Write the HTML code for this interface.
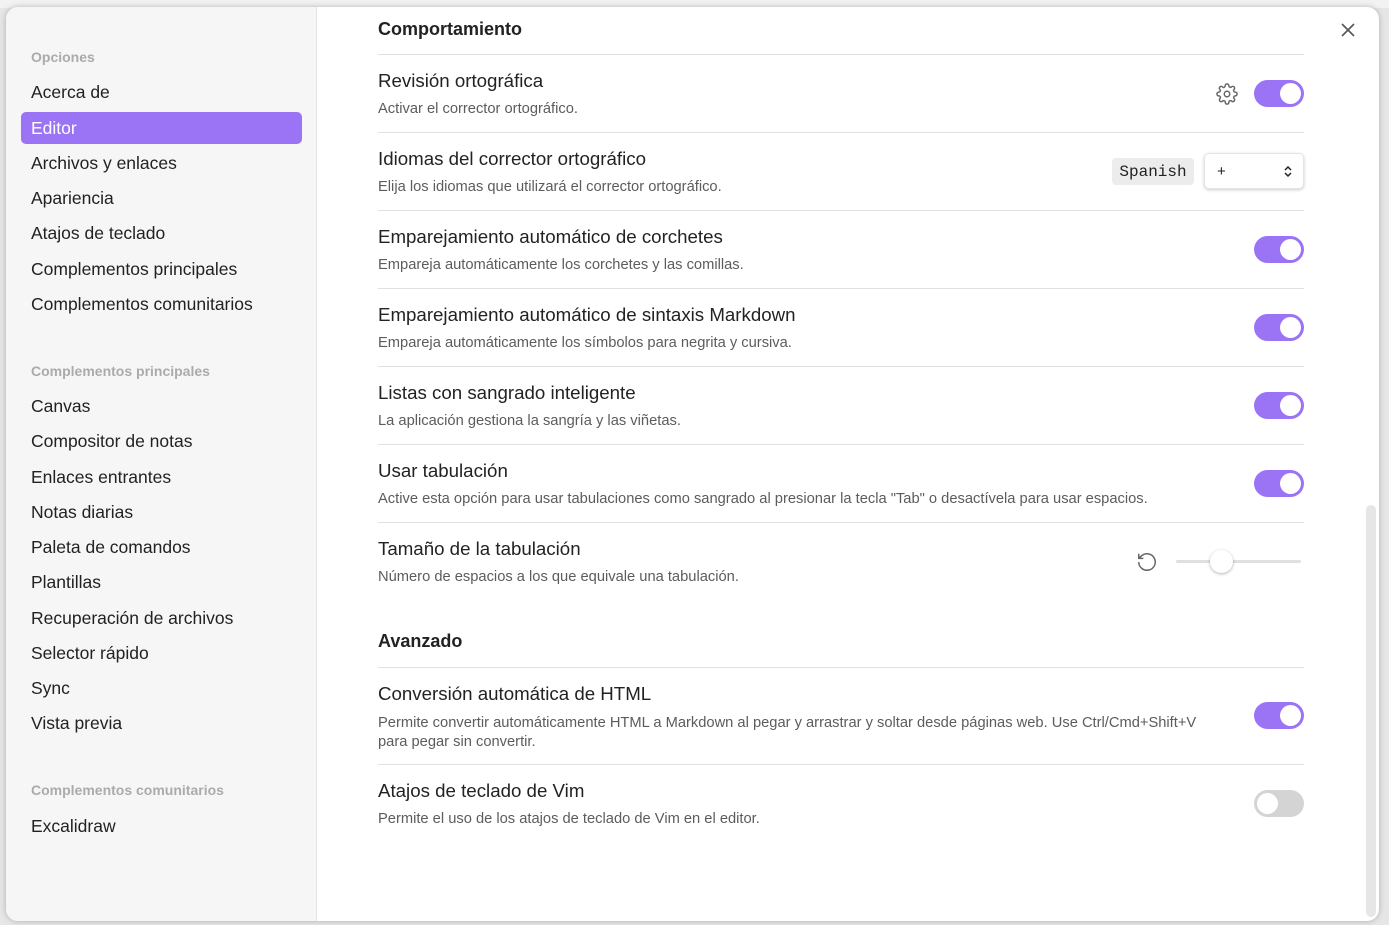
<!DOCTYPE html>
<html><head><meta charset="utf-8"><style>
*{margin:0;padding:0;box-sizing:border-box}
body{width:1389px;height:925px;background:#e6e6e6;font-family:"Liberation Sans",sans-serif;position:relative;overflow:hidden}
.top{position:absolute;left:0;top:0;width:1389px;height:8px;background:#f2f2f2}
.modal{position:absolute;left:6px;top:7px;width:1373px;height:914px;background:#fff;border-radius:12px;overflow:hidden;box-shadow:0 0 6px rgba(0,0,0,.25)}
.side{position:absolute;left:0;top:0;width:311px;height:100%;background:#f6f6f6;border-right:1px solid #e3e3e3}
.t{position:absolute;white-space:nowrap}
.hd{color:#ababab;font-size:14px;font-weight:bold;left:25px}
.it{color:#222;font-size:17.5px;left:25px}
.sel{position:absolute;left:15px;top:105px;width:281px;height:32px;background:#9a74f4;border-radius:5px}
.ti{font-size:18.7px;color:#222;left:372px}
.de{font-size:14.7px;color:#5c5c5c;left:372px;margin-top:2px}
.sh{font-size:18px;font-weight:bold;color:#222;left:372px}
.hr{position:absolute;left:372px;width:926px;height:1px;background:#e0e0e0}
.tg{position:absolute;left:1248px;width:50px;height:27px;border-radius:14px;background:#9a74f4}
.tg::after{content:"";position:absolute;right:3px;top:3px;width:21px;height:21px;border-radius:50%;background:#fff}
.off{background:#d4d4d4}
.off::after{left:3px;right:auto}
.sb{position:absolute;left:1360px;top:498px;width:10px;height:412px;background:#e6e6e6;border-radius:5px}
</style></head><body>
<div class="top"></div>
<div class="modal">
<div class="side">
<div class="t hd" style="top:42px">Opciones</div>
<div class="t it" style="top:75px">Acerca de</div>
<div class="sel"></div>
<div class="t it" style="top:111px;color:#fff">Editor</div>
<div class="t it" style="top:146px">Archivos y enlaces</div>
<div class="t it" style="top:181px">Apariencia</div>
<div class="t it" style="top:216px">Atajos de teclado</div>
<div class="t it" style="top:252px">Complementos principales</div>
<div class="t it" style="top:287px">Complementos comunitarios</div>
<div class="t hd" style="top:356px">Complementos principales</div>
<div class="t it" style="top:389px">Canvas</div>
<div class="t it" style="top:424px">Compositor de notas</div>
<div class="t it" style="top:460px">Enlaces entrantes</div>
<div class="t it" style="top:495px">Notas diarias</div>
<div class="t it" style="top:530px">Paleta de comandos</div>
<div class="t it" style="top:565px">Plantillas</div>
<div class="t it" style="top:601px">Recuperación de archivos</div>
<div class="t it" style="top:636px">Selector rápido</div>
<div class="t it" style="top:671px">Sync</div>
<div class="t it" style="top:706px">Vista previa</div>
<div class="t hd" style="top:775px">Complementos comunitarios</div>
<div class="t it" style="top:809px">Excalidraw</div>
</div>
<svg style="position:absolute;left:1334px;top:15px" width="16" height="16" viewBox="0 0 16 16"><path d="M2 2L14 14M14 2L2 14" stroke="#555" stroke-width="1.6"/></svg>
<div class="t sh" style="top:12px">Comportamiento</div>
<div class="hr" style="top:47px"></div>
<div class="t ti" style="top:63px">Revisión ortográfica</div>
<div class="t de" style="top:92px">Activar el corrector ortográfico.</div>
<svg style="position:absolute;left:1210px;top:76px" width="22" height="22" viewBox="0 0 24 24" fill="none" stroke="#666" stroke-width="1.6"><circle cx="12" cy="12" r="3"/><path d="M19.4 15a1.65 1.65 0 0 0 .33 1.820l.06.06a2 2 0 1 1-2.83 2.83l-.06-.06a1.65 1.65 0 0 0-1.82-.33 1.65 1.65 0 0 0-1 1.51V21a2 2 0 1 1-4 0v-.09A1.65 1.65 0 0 0 9 19.4a1.65 1.65 0 0 0-1.820.33l-.06.06a2 2 0 1 1-2.83-2.83l.06-.06A1.65 1.65 0 0 0 4.68 15a1.65 1.65 0 0 0-1.51-1H3a2 2 0 1 1 0-4h.09A1.65 1.65 0 0 0 4.6 9a1.65 1.65 0 0 0-.33-1.82l-.06-.06a2 2 0 1 1 2.830-2.83l.06.06A1.65 1.65 0 0 0 9 4.68a1.65 1.65 0 0 0 1-1.51V3a2 2 0 1 1 4 0v.09a1.65 1.65 0 0 0 1 1.51 1.65 1.65 0 0 0 1.82-.33l.06-.06a2 2 0 1 1 2.83 2.83l-.06.06A1.65 1.65 0 0 0 19.4 9a1.65 1.65 0 0 0 1.51 1H21a2 2 0 1 1 0 4h-.09a1.65 1.65 0 0 0-1.51 1z"/></svg>
<div class="tg" style="top:73px"></div>
<div class="hr" style="top:125px"></div>
<div class="t ti" style="top:141px">Idiomas del corrector ortográfico</div>
<div class="t de" style="top:170px">Elija los idiomas que utilizará el corrector ortográfico.</div>
<div class="t" style="left:1106px;top:151px;width:82px;height:27px;background:#ececec;border-radius:4px;font-family:'Liberation Mono',monospace;font-size:16px;line-height:28px;text-align:center;color:#222">Spanish</div>
<div class="t" style="left:1198px;top:146px;width:100px;height:36px;background:#fff;border-radius:5px;box-shadow:0 1px 3px rgba(0,0,0,.2);border:1px solid #e5e5e5;font-size:15px;line-height:36px;padding-left:12px;color:#222">+<svg style="position:absolute;right:11px;top:11px" width="8" height="13" viewBox="0 0 8 13" fill="none" stroke="#222" stroke-width="1.5"><path d="M1 5l3-3 3 3M1 8l3 3 3-3"/></svg></div>
<div class="hr" style="top:203px"></div>
<div class="t ti" style="top:219px">Emparejamiento automático de corchetes</div>
<div class="t de" style="top:248px">Empareja automáticamente los corchetes y las comillas.</div>
<div class="tg" style="top:229px"></div>
<div class="hr" style="top:281px"></div>
<div class="t ti" style="top:297px">Emparejamiento automático de sintaxis Markdown</div>
<div class="t de" style="top:326px">Empareja automáticamente los símbolos para negrita y cursiva.</div>
<div class="tg" style="top:307px"></div>
<div class="hr" style="top:359px"></div>
<div class="t ti" style="top:375px">Listas con sangrado inteligente</div>
<div class="t de" style="top:404px">La aplicación gestiona la sangría y las viñetas.</div>
<div class="tg" style="top:385px"></div>
<div class="hr" style="top:437px"></div>
<div class="t ti" style="top:453px">Usar tabulación</div>
<div class="t de" style="top:482px">Active esta opción para usar tabulaciones como sangrado al presionar la tecla "Tab" o desactívela para usar espacios.</div>
<div class="tg" style="top:463px"></div>
<div class="hr" style="top:515px"></div>
<div class="t ti" style="top:531px">Tamaño de la tabulación</div>
<div class="t de" style="top:560px">Número de espacios a los que equivale una tabulación.</div>
<svg style="position:absolute;left:1130px;top:544px" width="22" height="22" viewBox="0 0 24 24" fill="none" stroke="#666" stroke-width="1.6"><path d="M3 12a9 9 0 1 0 3-6.7L3 8"/><path d="M3 3v5h5"/></svg>
<div style="position:absolute;left:1170px;top:553px;width:125px;height:3px;background:#e0e0e0;border-radius:2px"></div>
<div style="position:absolute;left:1204px;top:543px;width:23px;height:23px;border-radius:50%;background:#fff;box-shadow:0 1px 3px rgba(0,0,0,.3)"></div>
<div class="t sh" style="top:624px">Avanzado</div>
<div class="hr" style="top:660px"></div>
<div class="t ti" style="top:676px">Conversión automática de HTML</div>
<div class="t de" style="top:705px;line-height:19px">Permite convertir automáticamente HTML a Markdown al pegar y arrastrar y soltar desde páginas web. Use Ctrl/Cmd+Shift+V<br>para pegar sin convertir.</div>
<div class="tg" style="top:695px"></div>
<div class="hr" style="top:757px"></div>
<div class="t ti" style="top:773px">Atajos de teclado de Vim</div>
<div class="t de" style="top:802px">Permite el uso de los atajos de teclado de Vim en el editor.</div>
<div class="tg off" style="top:783px"></div>
<div class="sb"></div>
</div>
</body></html>
